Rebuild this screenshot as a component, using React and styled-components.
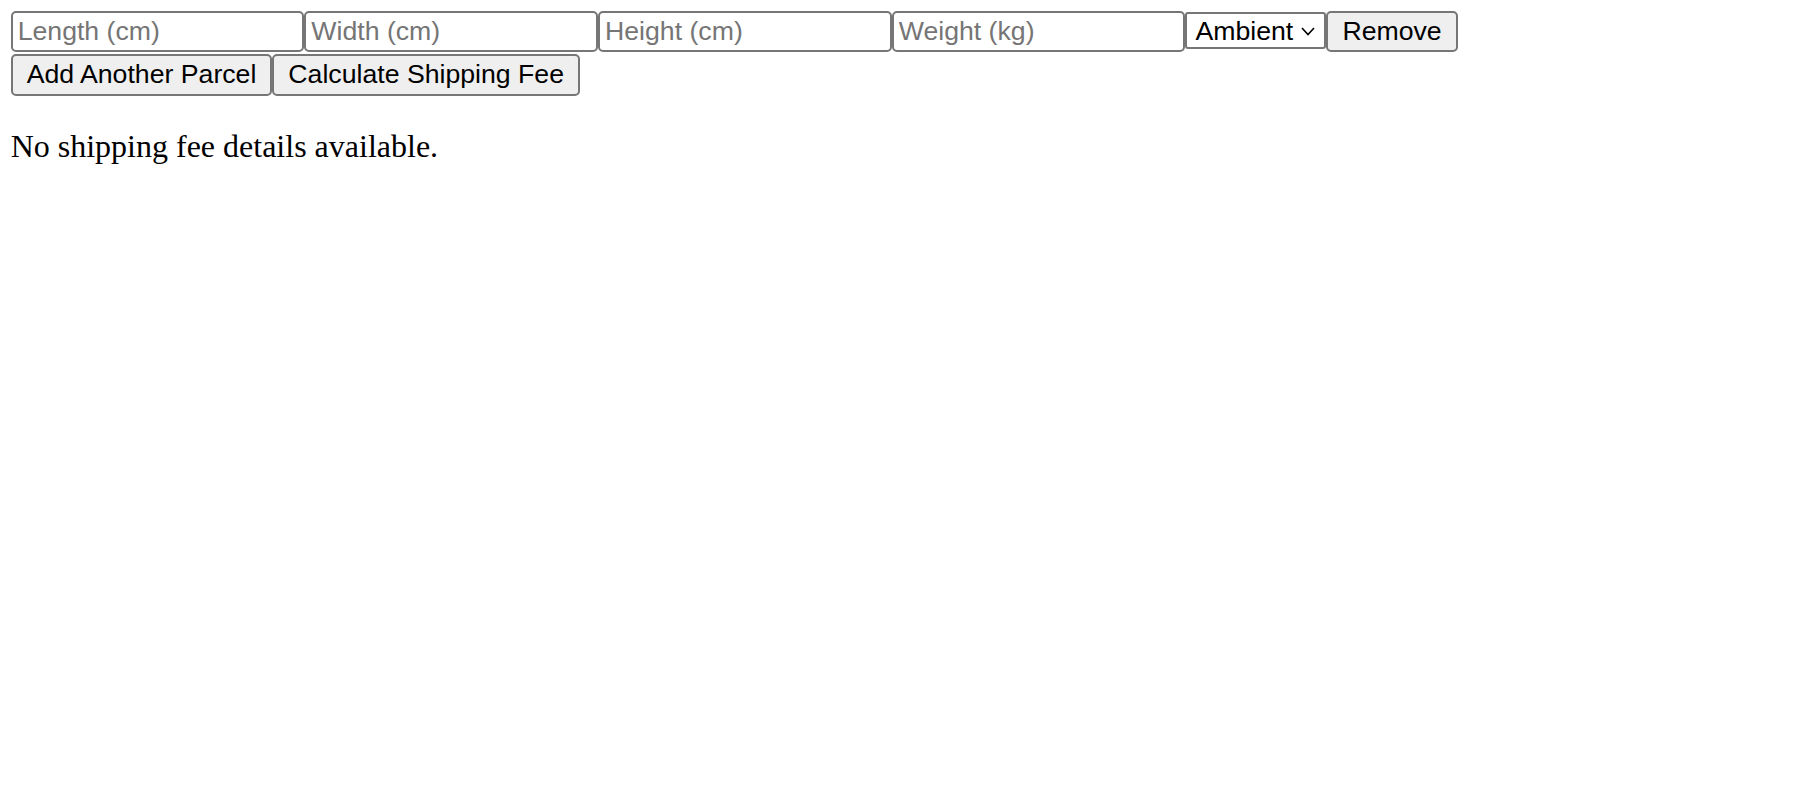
import styled, { createGlobalStyle } from "styled-components";

const GlobalStyle = createGlobalStyle`
  body {
    margin: 10.67px;
    font-family: "Liberation Serif", "Times New Roman", serif;
    font-size: 32px;
    color: #000;
    background: #fff;
  }
`;

const Row = styled.div`
  display: flex;
  align-items: baseline;
  margin-top: ${(p) => p.$offset || 0}px;
`;

const Field = styled.input`
  box-sizing: border-box;
  width: 293.7px;
  height: 41px;
  padding: 0 5px;
  border: 2px solid #767676;
  border-radius: 5px;
  font-family: "Liberation Sans", Arial, sans-serif;
  font-size: 26.67px;
  color: #000;
  background: #fff;
  outline: none;

  &::placeholder {
    color: #757575;
  }
`;

const SelectWrap = styled.div`
  position: relative;
  display: inline-flex;
`;

const Select = styled.select`
  appearance: none;
  box-sizing: border-box;
  width: 141px;
  height: 37px;
  padding: 0 30px 0 8px;
  border: 2px solid #767676;
  border-radius: 3px;
  font-family: "Liberation Sans", Arial, sans-serif;
  font-size: 26.67px;
  color: #000;
  background: #fff;
  outline: none;
`;

const Chevron = styled.svg`
  position: absolute;
  right: 11px;
  top: 50%;
  width: 14px;
  height: 9px;
  margin-top: -4px;
  pointer-events: none;
`;

const Button = styled.button`
  box-sizing: border-box;
  height: ${(p) => p.$h || 41}px;
  padding: 0 14px;
  border: 2px solid #767676;
  border-radius: 5px;
  background: #efefef;
  font-family: "Liberation Sans", Arial, sans-serif;
  font-size: 26.67px;
  color: #000;
  cursor: pointer;
`;

const Message = styled.p`
  margin: 32px 0;
`;

export default function App() {
  return (
    <>
      <GlobalStyle />
      <Row>
        <Field placeholder="Length (cm)" />
        <Field placeholder="Width (cm)" />
        <Field placeholder="Height (cm)" />
        <Field placeholder="Weight (kg)" />
        <SelectWrap>
          <Select defaultValue="ambient">
            <option value="ambient">Ambient</option>
            <option value="chilled">Chilled</option>
            <option value="frozen">Frozen</option>
          </Select>
          <Chevron viewBox="0 0 14 9">
            <path d="M1 1 L7 7.5 L13 1" fill="none" stroke="#000" strokeWidth="1.6" />
          </Chevron>
        </SelectWrap>
        <Button>Remove</Button>
      </Row>
      <Row $offset={2}>
        <Button $h={42}>Add Another Parcel</Button>
        <Button $h={42}>Calculate Shipping Fee</Button>
      </Row>
      <Message>No shipping fee details available.</Message>
    </>
  );
}
